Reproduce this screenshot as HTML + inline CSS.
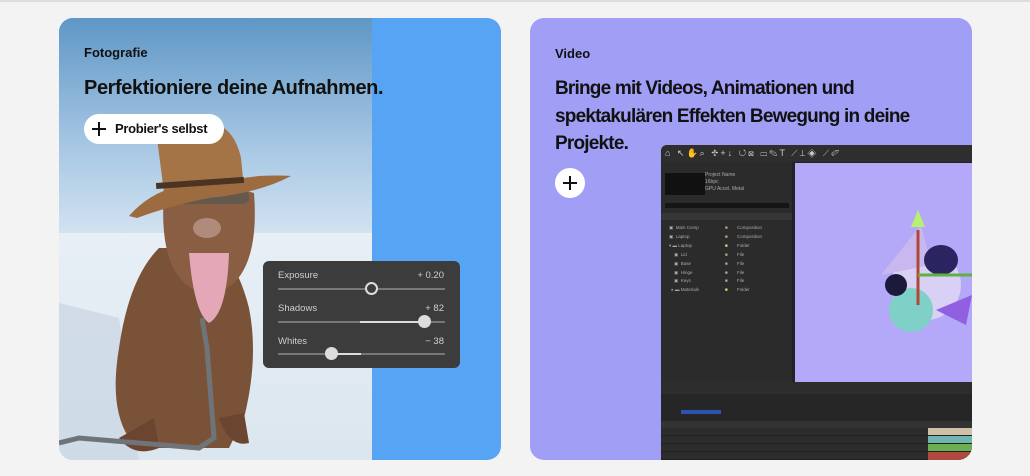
<!DOCTYPE html>
<html><head><meta charset="utf-8"><style>
*{margin:0;padding:0;box-sizing:border-box}
body{width:1030px;height:476px;background:#f3f3f3;font-family:"Liberation Sans",sans-serif;position:relative;overflow:hidden}
.top{position:absolute;left:0;top:0;width:1030px;height:2px;background:#ddd}
.card{position:absolute;top:18px;width:442px;height:442px;border-radius:14px;overflow:hidden}
.t{position:absolute;color:#111;font-weight:bold}
.pn{position:absolute;left:263px;top:261px;width:197px;height:107px;background:#3c3c3c;border-radius:6px;color:#cfcfcf;font-size:9.5px}
.pn .l{position:absolute;left:15px}
.pn .v{position:absolute;right:16px}
.pn .tr{position:absolute;left:15px;width:167px;height:2px;background:#777}
.rows{position:absolute;font-size:4.5px;color:#aaa;line-height:8.9px;white-space:pre}
.tb{position:absolute;top:3px;font-size:9px;color:#ccc;white-space:pre;letter-spacing:2px}
</style></head><body>
<div class="top"></div>
<div class="card" style="left:59px;background:#58a4f4">
<svg width="313" height="442" style="position:absolute;left:0;top:0">
<defs>
<linearGradient id="sky" x1="0" y1="0" x2="0" y2="1"><stop offset="0" stop-color="#5f97c6"/><stop offset="0.6" stop-color="#a8c8e4"/><stop offset="1" stop-color="#d3e3f1"/></linearGradient>
<linearGradient id="snow" x1="0" y1="0" x2="0" y2="1"><stop offset="0" stop-color="#e8eff6"/><stop offset="1" stop-color="#dbe6ef"/></linearGradient>
</defs>
<rect width="313" height="218" fill="url(#sky)"/>
<rect y="215" width="313" height="227" fill="url(#snow)"/>
<path d="M0 285 L60 300 L80 442 L0 442Z" fill="#c9d6e2" opacity=".7"/>
<path d="M100 230 Q70 260 60 330 Q50 390 70 420 L90 430 L170 430 L185 400 Q200 340 190 290 Q180 250 160 230Z" fill="#7a5238"/>
<path d="M60 420 Q75 440 100 430 L95 400Z" fill="#6b4530"/>
<path d="M160 400 Q170 430 190 425 L185 395Z" fill="#6b4530"/>
<path d="M105 175 Q100 240 125 265 Q150 285 175 265 Q200 240 195 175 Q150 160 105 175Z" fill="#8a5e42"/>
<ellipse cx="148" cy="210" rx="14" ry="10" fill="#b08a7a"/>
<path d="M130 235 Q135 295 150 305 Q168 295 170 235Z" fill="#e3a7b8"/>
<rect x="110" y="172" width="80" height="14" rx="6" fill="#555" opacity=".7"/>
<path d="M98 120 Q110 102 150 104 Q175 108 182 140 L185 170 L105 175Z" fill="#a47447"/>
<path d="M70 198 Q90 175 120 168 L200 158 Q220 157 232 158 Q200 175 150 180 Q110 188 78 200Z" fill="#9c6b40"/>
<rect x="97" y="162" width="88" height="6" fill="#4b3424" transform="rotate(-4 140 165)"/>
<path d="M143 300 L148 330 L155 420 L140 430 L20 420 L0 425" stroke="#6f7478" stroke-width="5" fill="none"/>
</svg>
<div class="t" style="left:25px;top:27px;font-size:13px">Fotografie</div>
<div class="t" style="left:25px;top:59px;font-size:20px;letter-spacing:-0.4px;white-space:nowrap">Perfektioniere deine Aufnahmen.</div>
<div style="position:absolute;left:25px;top:96px;width:140px;height:30px;background:#fff;border-radius:15px;font-weight:bold;font-size:13px;line-height:30px;padding-left:31px;color:#111;letter-spacing:-0.3px">Probier's selbst
<span style="position:absolute;left:8px;top:8px;width:14px;height:14px"><span style="position:absolute;left:6px;top:0;width:2px;height:14px;background:#111"></span><span style="position:absolute;left:0;top:6px;width:14px;height:2px;background:#111"></span></span></div>
</div>
<div class="pn">
<div class="l" style="top:9px">Exposure</div><div class="v" style="top:9px">+ 0.20</div>
<div class="tr" style="top:27px"></div>
<div style="position:absolute;left:102px;top:21px;width:13px;height:13px;border-radius:50%;border:2px solid #ddd;background:#3c3c3c"></div>
<div class="l" style="top:42px">Shadows</div><div class="v" style="top:42px">+ 82</div>
<div class="tr" style="top:60px"></div><div style="position:absolute;left:97px;top:60px;width:60px;height:2px;background:#ddd"></div>
<div style="position:absolute;left:155px;top:54px;width:13px;height:13px;border-radius:50%;background:#ddd"></div>
<div class="l" style="top:75px">Whites</div><div class="v" style="top:75px">− 38</div>
<div class="tr" style="top:92px"></div><div style="position:absolute;left:70px;top:92px;width:28px;height:2px;background:#ddd"></div>
<div style="position:absolute;left:62px;top:86px;width:13px;height:13px;border-radius:50%;background:#ddd"></div>
</div>

<div class="card" style="left:530px;background:#a09ef5">
<div class="t" style="left:25px;top:28px;font-size:13px">Video</div>
<div class="t" style="left:25px;top:57px;font-size:19px;letter-spacing:-0.8px;line-height:27.5px;width:400px">Bringe mit Videos, Animationen und<br>spektakulären Effekten Bewegung in deine<br>Projekte.</div>
<div style="position:absolute;left:25px;top:150px;width:30px;height:30px;border-radius:50%;background:#fff"><span style="position:absolute;left:14px;top:8px;width:2px;height:14px;background:#111"></span><span style="position:absolute;left:8px;top:14px;width:14px;height:2px;background:#111"></span></div>
<div style="position:absolute;left:131px;top:127px;width:311px;height:315px;background:#232323;border-top-left-radius:6px;overflow:hidden">
<div style="position:absolute;left:0;top:0;width:311px;height:17px;background:#2e2e2e"></div>
<div class="tb" style="left:4px">⌂ ↖✋⌕ ✥+↓ ↺⊠ ▭✎T ⟋⊥◈ ⟋✐</div>
<div style="position:absolute;left:0;top:17px;width:131px;height:220px;background:#2b2b2b"></div>
<div style="position:absolute;left:4px;top:28px;width:40px;height:22px;background:#111"></div>
<div style="position:absolute;left:44px;top:27px;font-size:5px;color:#aaa;line-height:7px">Project Name<br>16bpc<br>GPU Accel. Metal</div>
<div style="position:absolute;left:4px;top:58px;width:124px;height:5px;background:#151515"></div>
<div style="position:absolute;left:0;top:68px;width:131px;height:7px;background:#363636"></div>
<div class="rows" style="left:8px;top:79px">▣  Main Comp
▣  Laptop
▾ ▬ Laptop
    ▣  Lid
    ▣  Base
    ▣  Hinge
    ▣  Keys
  ▸ ▬ Materials</div>
<div class="rows" style="left:64px;top:79px;color:#c9ab90">■
■
<span style="color:#d8f07a">■</span>
■
■
■
■
<span style="color:#d8f07a">■</span></div>
<div class="rows" style="left:76px;top:79px">Composition
Composition
Folder
File
File
File
File
Folder</div>
<div style="position:absolute;left:134px;top:18px;width:177px;height:219px;background:#b4a8f8"></div>
<svg style="position:absolute;left:190px;top:60px" width="121" height="140">
<circle cx="75" cy="80" r="35" fill="#d8d0f5"/><polygon points="30,70 70,20 80,60" fill="#c9b8f0"/>
<circle cx="60" cy="105" r="22" fill="#7fd1c8"/><circle cx="45" cy="80" r="11" fill="#1c1a3a"/>
<ellipse cx="90" cy="55" rx="17" ry="15" fill="#2a2560"/><polygon points="85,105 121,90 115,120" fill="#9060e0"/>
<line x1="67" y1="25" x2="67" y2="100" stroke="#b04838" stroke-width="3"/><line x1="67" y1="70" x2="121" y2="70" stroke="#60b040" stroke-width="3"/>
<polygon points="60,22 67,5 74,22" fill="#b8f070"/></svg>
<div style="position:absolute;left:0;top:237px;width:311px;height:12px;background:#2d2d2d"></div>
<div style="position:absolute;left:0;top:249px;width:311px;height:66px;background:#262626"></div>
<div style="position:absolute;left:20px;top:265px;width:40px;height:4px;background:#2a54b0"></div>
<div style="position:absolute;left:0;top:276px;width:311px;height:7px;background:#333"></div>
<div style="position:absolute;left:0;top:283px;width:267px;height:32px;background:repeating-linear-gradient(#2c2c2c 0 7px,#222 7px 8px)"></div>
<div style="position:absolute;left:267px;top:283px;width:44px;height:32px;background:linear-gradient(#cfc0a8 0 7px,#222 7px 8px,#6fb5b0 8px 15px,#222 15px 16px,#6ab050 16px 23px,#222 23px 24px,#b04a40 24px 32px)"></div>
</div>
</div>
</body></html>
